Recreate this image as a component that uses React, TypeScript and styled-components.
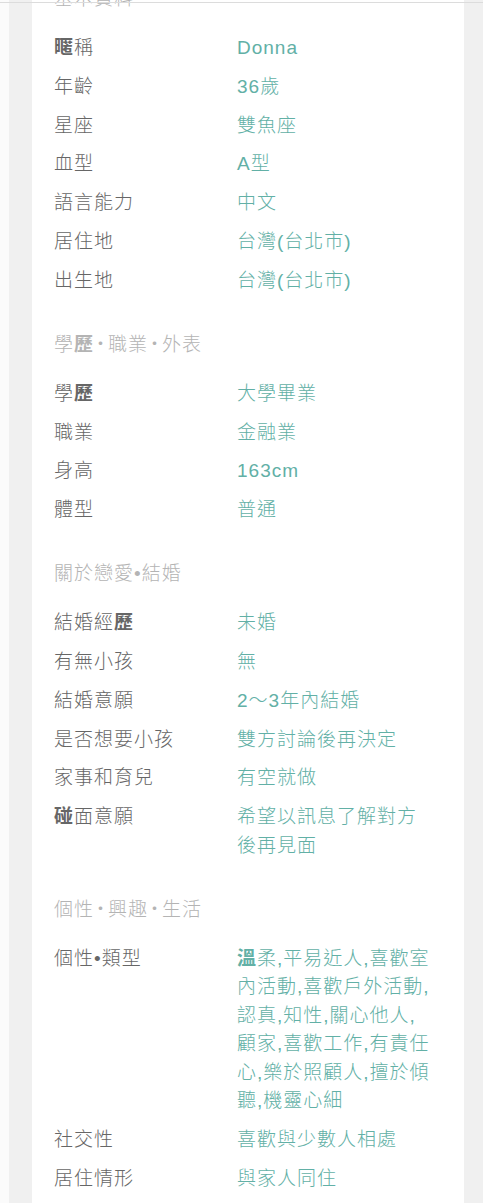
import React from "react";
import styled, { createGlobalStyle } from "styled-components";

const GlobalStyle = createGlobalStyle`
  html, body {
    margin: 0;
    padding: 0;
    background: #ffffff;
    overflow: hidden;
  }
  body {
    font-family: "Liberation Sans", "Noto Sans CJK TC", sans-serif;
  }
`;

const TopLine = styled.div`
  position: fixed;
  top: 2px;
  left: 0;
  right: 0;
  height: 1px;
  background: #dcdcdc;
  z-index: 2;
`;

const Page = styled.div`
  display: flex;
  min-height: 1203px;
  padding-left: 9px;
  background: #fbfbfb;
`;

const Gutter = styled.div`
  flex: 1;
  display: flex;
  background: #f0f0f0;
  padding: 0 19px 0 23px;
`;

const Card = styled.main`
  width: 432px;
  box-sizing: border-box;
  background: #ffffff;
  padding: 0 0 0 22px;
  overflow: hidden;
`;

const Section = styled.section<{ $first?: boolean }>`
  display: flex;
  flex-direction: column;
  margin-top: ${(p) => (p.$first ? "-15px" : "35.5px")};
`;

const SectionTitle = styled.h2`
  margin: 0 0 20.5px;
  font-size: 19px;
  font-weight: 300;
  line-height: 28.5px;
  letter-spacing: 1px;
  color: #b4b4b4;
`;

const Sep = styled.span`
  margin: 0 -3px;
`;

const Rows = styled.dl`
  display: grid;
  grid-template-columns: 183px 196px;
  row-gap: 10.3px;
  margin: 0;
`;

const Label = styled.dt`
  margin: 0;
  font-size: 19px;
  font-weight: 300;
  line-height: 28.5px;
  letter-spacing: 1px;
  color: #666666;
`;

const Value = styled.dd`
  margin: 0;
  font-size: 19px;
  font-weight: 300;
  line-height: 28.5px;
  letter-spacing: 1px;
  color: #62b0a6;
  word-break: break-all;
`;

const Latin = styled.span`
  font-weight: 400;
`;

const Heavy = styled.b`
  font-weight: 700;
`;

type Item = [React.ReactNode, React.ReactNode];

const sections: { title: React.ReactNode; items: Item[] }[] = [
  {
    title: "基本資料",
    items: [
      [<><Heavy>暱</Heavy>稱</>, <Latin>Donna</Latin>],
      ["年齡", <><Latin>36</Latin>歲</>],
      ["星座", "雙魚座"],
      ["血型", <><Latin>A</Latin>型</>],
      ["語言能力", "中文"],
      ["居住地", "台灣(台北市)"],
      ["出生地", "台灣(台北市)"],
    ],
  },
  {
    title: <>學<Heavy>歷</Heavy><Sep>‧</Sep>職業<Sep>‧</Sep>外表</>,
    items: [
      [<>學<Heavy>歷</Heavy></>, "大學畢業"],
      ["職業", "金融業"],
      ["身高", <Latin>163cm</Latin>],
      ["體型", "普通"],
    ],
  },
  {
    title: "關於戀愛•結婚",
    items: [
      [<>結婚經<Heavy>歷</Heavy></>, "未婚"],
      ["有無小孩", "無"],
      ["結婚意願", <><Latin>2</Latin>～<Latin>3</Latin>年內結婚</>],
      ["是否想要小孩", "雙方討論後再決定"],
      ["家事和育兒", "有空就做"],
      [<><Heavy>碰</Heavy>面意願</>, "希望以訊息了解對方後再見面"],
    ],
  },
  {
    title: <>個性<Sep>‧</Sep>興趣<Sep>‧</Sep>生活</>,
    items: [
      [
        "個性•類型",
        <>
          <Heavy>溫</Heavy>柔,平易近人,喜歡室內活動,喜歡戶外活動,認真,知性,關心他人,顧家,喜歡工作,有責任心,樂於照顧人,擅於傾聽,機靈心細
        </>,
      ],
      ["社交性", "喜歡與少數人相處"],
      ["居住情形", "與家人同住"],
      ["抽菸", "不抽菸"],
    ],
  },
];

export default function App() {
  return (
    <>
      <GlobalStyle />
      <TopLine />
      <Page>
        <Gutter>
          <Card>
            {sections.map((s, i) => (
              <Section key={i} $first={i === 0}>
                <SectionTitle>{s.title}</SectionTitle>
                <Rows>
                  {s.items.map((it, j) => (
                    <React.Fragment key={j}>
                      <Label>{it[0]}</Label>
                      <Value>{it[1]}</Value>
                    </React.Fragment>
                  ))}
                </Rows>
              </Section>
            ))}
          </Card>
        </Gutter>
      </Page>
    </>
  );
}
